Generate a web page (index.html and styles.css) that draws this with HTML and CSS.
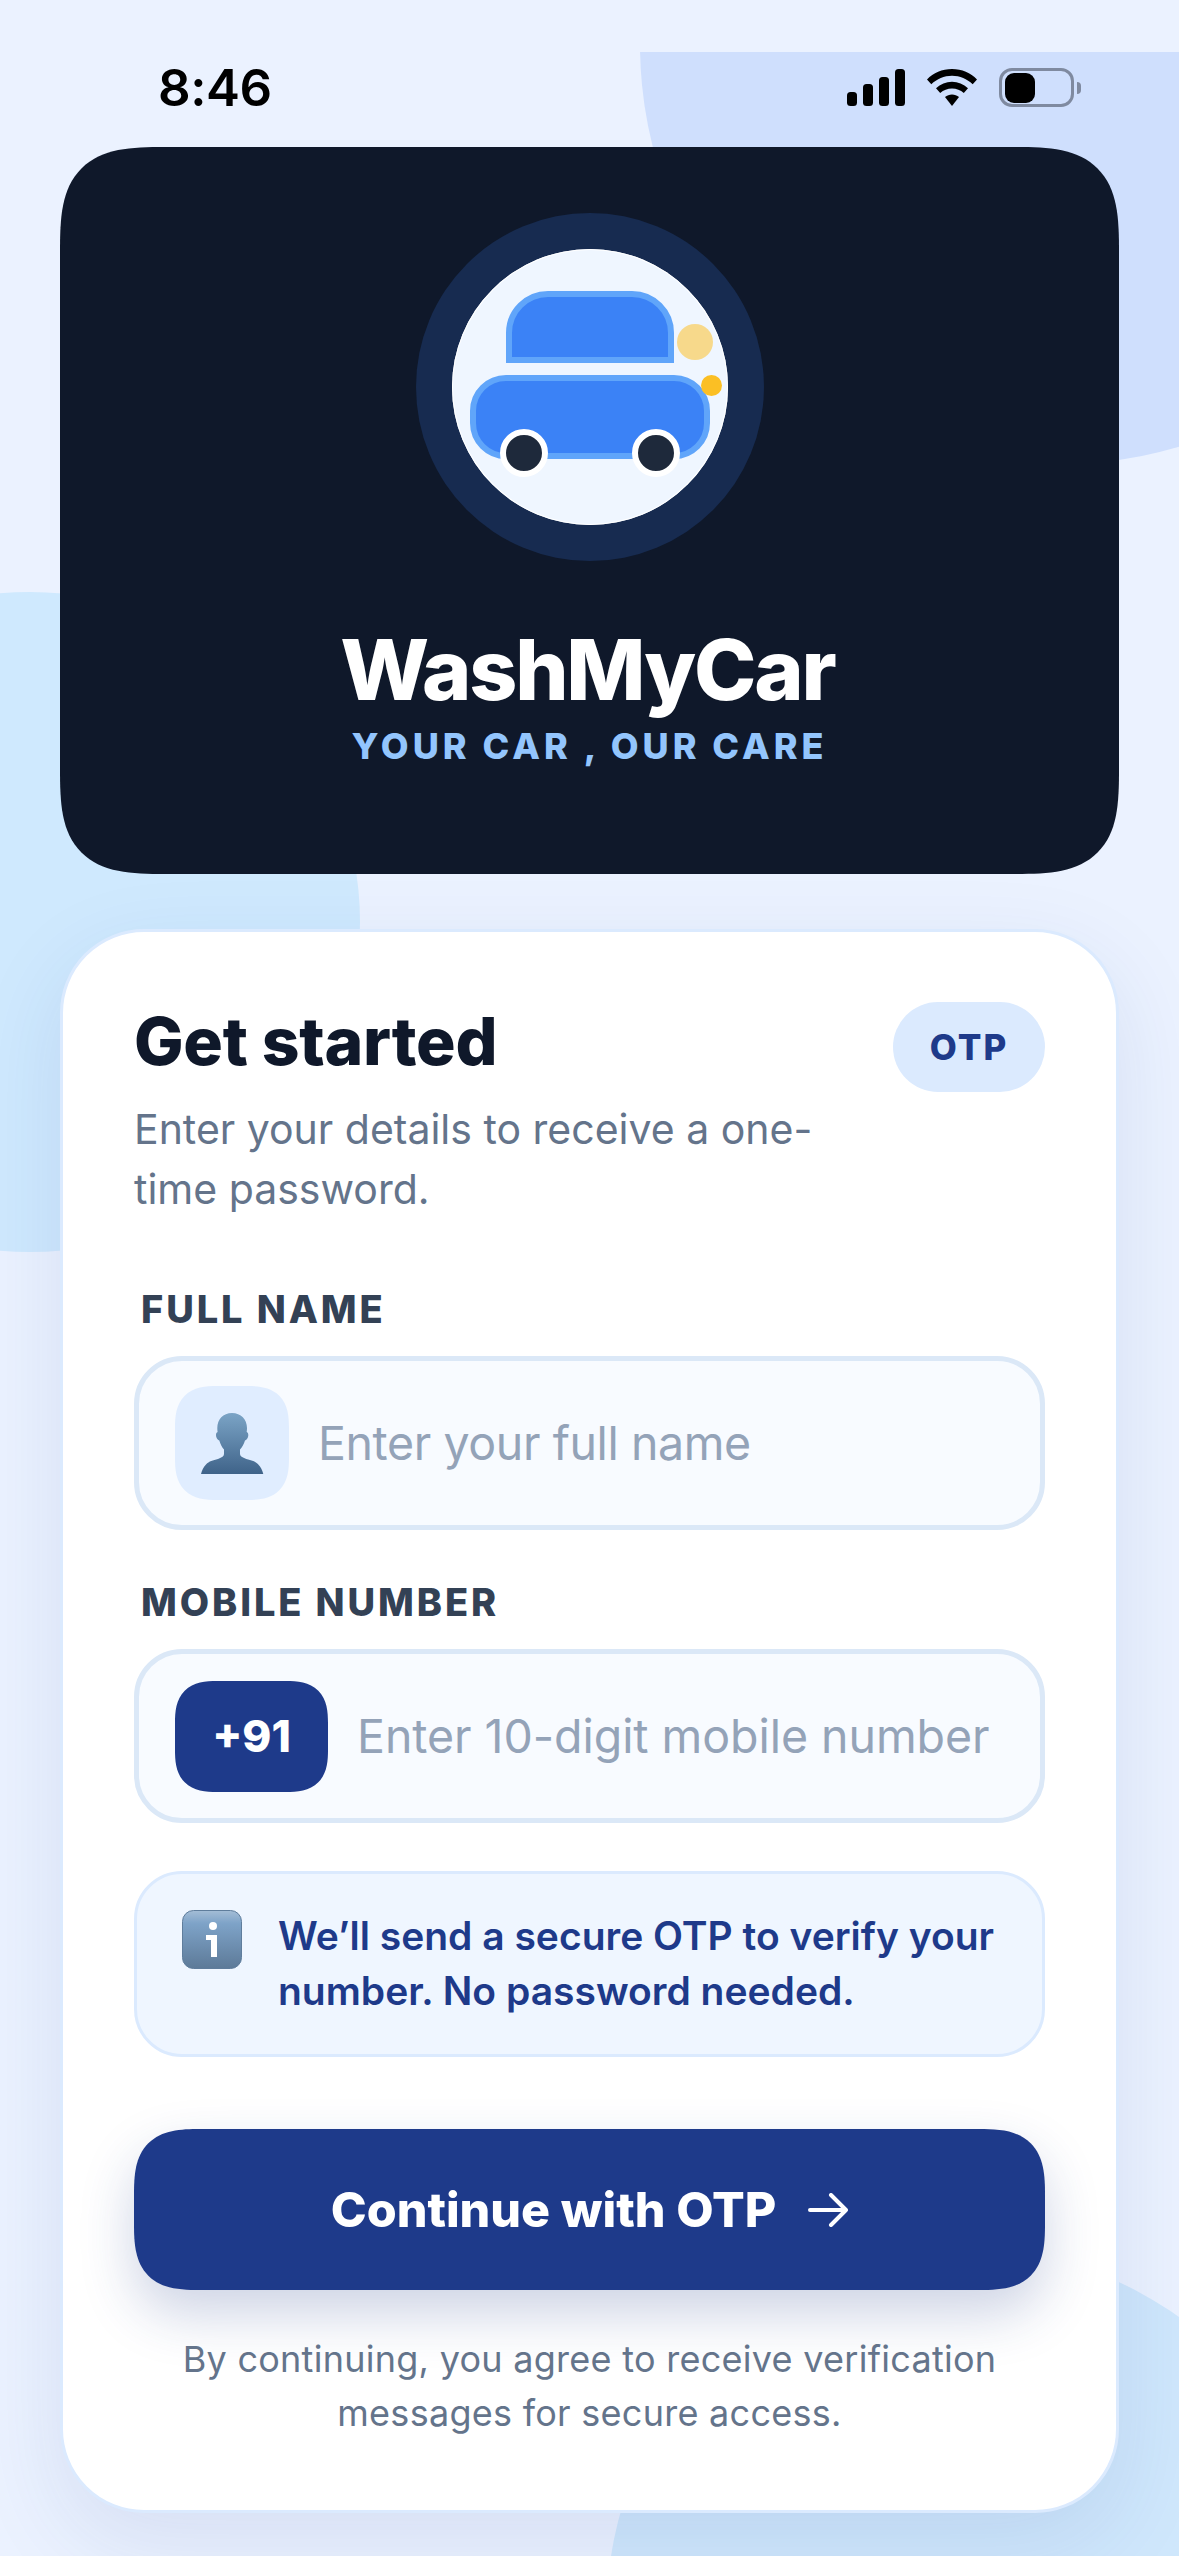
FILE: index.html
```html
<!DOCTYPE html>
<html lang="en">
<head>
<meta charset="utf-8">
<title>WashMyCar</title>
<link rel="stylesheet" href="styles.css">
</head>
<body>
<div class="blobs" aria-hidden="true">
  <div class="blob blob-top"></div>
  <div class="blob blob-left"></div>
  <div class="blob blob-bottom"></div>
</div>
<main class="screen">
  <header class="status">
    <span class="time">8:46</span>
    <div class="status-icons">
      <svg class="signal" width="58" height="37" viewBox="0 0 58 37"><rect x="0" y="23" width="10" height="14" rx="3.5"/><rect x="16" y="15" width="10" height="22" rx="3.5"/><rect x="32" y="8" width="10" height="29" rx="3.5"/><rect x="48" y="0" width="10" height="37" rx="3.5"/></svg>
      <svg class="wifi" width="50" height="37" viewBox="0 0 50 37"><path d="M25 0C15 0 6.500 3.800 0 10.500L4.300 15.300C10 10 17 6.800 25 6.800S40 10 45.700 15.300L50 10.500C43.500 3.800 35 0 25 0Z"/><path d="M25 12.800C19 12.800 13.500 15 9 19.200L13.200 24C16.500 21.200 20.500 19.500 25 19.500S33.500 21.200 36.800 24L41 19.200C36.500 15 31 12.800 25 12.800Z"/><path d="M25 25.500C22.300 25.500 20 26.400 18 28L25 37L32 28C30 26.400 27.700 25.500 25 25.500Z"/></svg>
      <div class="battery"><span class="battery-shell"><span class="battery-level"></span></span><span class="battery-tip"></span></div>
    </div>
  </header>

  <section class="hero">
    <div class="logo-ring">
      <div class="logo">
        <div class="car">
          <div class="car-roof"></div>
          <div class="car-body"></div>
          <span class="wheel wheel-back"></span>
          <span class="wheel wheel-front"></span>
          <span class="spark spark-big"></span>
          <span class="spark spark-small"></span>
        </div>
      </div>
    </div>
    <h1 class="brand">WashMyCar</h1>
    <p class="tagline">YOUR CAR , OUR CARE</p>
  </section>

  <section class="card">
    <div class="card-head">
      <div class="card-intro">
        <h2 class="card-title">Get started</h2>
        <p class="card-sub">Enter your details to receive a one-time password.</p>
      </div>
      <span class="otp-pill">OTP</span>
    </div>

    <label class="field-label field-label-name">FULL NAME</label>
    <div class="field">
      <span class="field-icon">
        <svg width="63" height="61" viewBox="0 0 63 61"><defs><linearGradient id="bust" x1="0" y1="0" x2="0" y2="1"><stop offset="0" stop-color="#7ba4c6"/><stop offset="1" stop-color="#3f6389"/></linearGradient></defs><path fill="url(#bust)" d="M31 0C22 0 16.300 6.500 16.300 15C16.300 17 16.500 18 16.600 19C15 19.500 14.700 22 15.300 24C15.900 26 17 27 18.300 27.500C19.300 31 21 34.500 23 36.500V41C23 43 21 44.500 17 46C12 47.500 8 48 5 51.500C2.500 54 1 57 0 61H62.300C61.300 57 59.800 54 57.300 51.500C54.300 48 50.300 47.500 45.300 46C41.300 44.500 39 43 39 41V36.500C41 34.500 43 31 44 27.500C45.300 27 46.400 26 47 24C47.600 22 47.300 19.500 45.700 19C45.800 18 46 17 46 15C46 6.500 40 0 31 0Z"/></svg>
      </span>
      <span class="placeholder placeholder-name">Enter your full name</span>
    </div>

    <label class="field-label field-label-mobile">MOBILE NUMBER</label>
    <div class="field">
      <span class="prefix">+91</span>
      <span class="placeholder placeholder-mobile">Enter 10-digit mobile number</span>
    </div>

    <div class="notice">
      <svg class="notice-icon" width="60" height="60" viewBox="0 0 60 60"><defs><linearGradient id="infoBg" x1="0" y1="0" x2="0" y2="1"><stop offset="0" stop-color="#a4bdd6"/><stop offset=".22" stop-color="#7ea3c8"/><stop offset="1" stop-color="#5d7a98"/></linearGradient></defs><rect x=".5" y=".5" width="59" height="58" rx="11" fill="url(#infoBg)" stroke="#5f7d9c"/><circle cx="31" cy="16" r="4" fill="#fff"/><path fill="#fff" d="M24 25H35V47H29V30H24Z"/></svg>
      <p class="notice-text">We’ll send a secure OTP to verify your number. No password needed.</p>
    </div>

    <button class="cta" type="button">
      <span>Continue with OTP</span>
      <svg width="40" height="34" viewBox="0 0 40 34"><path d="M2 17H38M23 2L38 17L23 32" fill="none" stroke="#fff" stroke-width="4" stroke-linecap="round" stroke-linejoin="round"/></svg>
    </button>

    <p class="legal">By continuing, you agree to receive verification messages for secure access.</p>
  </section>
</main>
</body>
</html>
```
FILE: styles.css
```css
* { box-sizing: border-box; }
html, body { margin: 0; padding: 0; }
body {
  width: 1179px;
  height: 2556px;
  overflow: hidden;
  position: relative;
  background: #ebf2ff;
  font-family: Inter, "Noto Sans", sans-serif;
}
.blobs {
  position: absolute;
  left: 0; right: 0; top: 52px; bottom: 0;
  overflow: hidden;
}
.blob { position: absolute; border-radius: 50%; }
.blob-top { width: 840px; height: 840px; left: 640px; top: -428px; background: #cfdffd; }
.blob-left { width: 660px; height: 660px; left: -300px; top: 540px; background: #cfe9fe; }
.blob-bottom { width: 722px; height: 722px; left: 607px; top: 2197px; background: #cfe7fc; }

.screen { position: relative; padding: 0 60px; }

.status {
  height: 147px;
  display: flex;
  justify-content: space-between;
  align-items: flex-start;
  padding: 66px 38px 0 98px;
}
.time { font-size: 51px; line-height: 44px; font-weight: 600; color: #000; letter-spacing: -.5px; }
.status-icons { display: flex; align-items: center; gap: 22px; padding-top: 2px; }
.signal, .wifi { fill: #000; display: block; }
.battery { display: flex; align-items: center; gap: 3px; }
.battery-shell {
  width: 75px; height: 39px;
  border: 3.500px solid #7f8aa0;
  border-radius: 13px;
  padding: 1.500px 2.500px;
  display: block;
}
.battery-level { display: block; width: 30px; height: 100%; background: #000; border-radius: 9px; }
.battery-tip { width: 4px; height: 12px; background: #7f8aa0; border-radius: 0 5px 5px 0; }

.hero {
  height: 727px;
  background: #0f182a;
  border-radius: 105px;
  corner-shape: superellipse(1.6);
  display: flex;
  flex-direction: column;
  align-items: center;
  padding-top: 66px;
}
.logo-ring {
  width: 348px; height: 348px;
  border-radius: 50%;
  background: #172b50;
  display: flex; align-items: center; justify-content: center;
}
.logo {
  width: 276px; height: 276px;
  border-radius: 50%;
  background: #eff6ff;
  box-shadow: 0 0 0 1px #fff inset;
  position: relative;
}
.car { position: absolute; inset: 0; }
.car-roof {
  position: absolute;
  left: 54px; top: 42px;
  width: 168px; height: 72px;
  background: #3b82f6;
  border: 6px solid #60a5fa;
  border-radius: 42px 42px 0 0;
}
.car-body {
  position: absolute;
  left: 18px; top: 126px;
  width: 240px; height: 84px;
  background: #3b82f6;
  border: 6px solid #60a5fa;
  border-radius: 36px;
}
.wheel {
  position: absolute;
  top: 180px;
  width: 48px; height: 48px;
  background: #1e293b;
  border: 6px solid #fff;
  border-radius: 50%;
}
.wheel-back { left: 48px; }
.wheel-front { left: 180px; }
.spark { position: absolute; border-radius: 50%; }
.spark-big { left: 225px; top: 75px; width: 36px; height: 36px; background: #f7d98b; }
.spark-small { left: 249px; top: 126px; width: 21px; height: 21px; background: #fbbf24; }

.brand {
  margin: 61px 4px 0 0;
  font-size: 84px;
  line-height: 96px;
  font-weight: 800;
  letter-spacing: -2.200px;
  color: #fff;
}
.tagline {
  margin: 6px 0 0;
  font-size: 36px;
  line-height: 44px;
  font-weight: 800;
  letter-spacing: 4px;
  color: #93c5fd;
}

.card {
  margin-top: 55px;
  background: #fff;
  border: 3px solid #dbeafe;
  border-radius: 84px;
  padding: 70px 71px 70px;
  box-shadow: 0 30px 90px rgba(30, 58, 138, .1);
}
.card-head { display: flex; justify-content: space-between; align-items: flex-start; }
.card-intro { width: 700px; }
.card-title {
  margin: 3px 0 0;
  font-size: 66px;
  line-height: 72px;
  font-weight: 800;
  letter-spacing: -.300px;
  color: #0f182a;
}
.card-sub {
  margin: 22px 0 0;
  font-size: 41px;
  line-height: 60px;
  color: #64748b;
}
.otp-pill {
  width: 152px; height: 90px;
  border-radius: 45px;
  background: #dbeafe;
  color: #1e3a8a;
  font-size: 35px;
  font-weight: 800;
  letter-spacing: 2px;
  display: flex; align-items: center; justify-content: center;
}
.field-label {
  display: block;
  padding-left: 7px;
  font-size: 38px;
  line-height: 44px;
  font-weight: 800;
  letter-spacing: 2.900px;
  color: #334155;
}
.field-label-name { margin-top: 68px; }
.field-label-mobile { margin-top: 50px; }
.field {
  margin-top: 25px;
  height: 174px;
  display: flex;
  align-items: center;
  gap: 29px;
  padding: 0 36px;
  background: #f8fbff;
  border: 5px solid #dbe8f7;
  border-radius: 48px;
}
.field-icon {
  width: 114px; height: 114px;
  flex: none;
  background: #e0edff;
  border-radius: 42px;
  corner-shape: superellipse(1.4);
  display: flex; align-items: center; justify-content: center;
}
.placeholder { font-size: 46.500px; color: #94a3b8; white-space: nowrap; }
.placeholder-name { letter-spacing: -.400px; }
.placeholder-mobile { letter-spacing: -.050px; }
.prefix {
  width: 153px; height: 111px;
  flex: none;
  background: #1e3a8a;
  color: #fff;
  border-radius: 42px;
  corner-shape: superellipse(1.4);
  font-size: 44px;
  font-weight: 800;
  display: flex; align-items: center; justify-content: center;
}
.notice {
  margin-top: 48px;
  height: 186px;
  display: flex;
  align-items: flex-start;
  gap: 36px;
  padding: 36px 36px 0 45px;
  background: #eff6ff;
  border: 3px solid #dbeafe;
  border-radius: 48px;
}
.notice-icon { flex: none; display: block; }
.notice-text {
  margin: -2px 0 0;
  font-size: 39px;
  line-height: 55px;
  font-weight: 600;
  color: #1e3a8a;
}
.cta {
  margin-top: 72px;
  width: 100%;
  height: 161px;
  border: 0;
  background: #1e3a8a;
  border-radius: 66px;
  corner-shape: superellipse(1.5);
  color: #fff;
  font-family: inherit;
  font-size: 48.400px;
  font-weight: 800;
  display: flex; align-items: center; justify-content: center;
  gap: 32px;
  box-shadow: 0 24px 54px rgba(30, 58, 138, .22);
}
.legal {
  margin: 42px 20px 0;
  font-size: 36px;
  line-height: 54px;
  letter-spacing: .27px;
  text-align: center;
  color: #64748b;
}
```
